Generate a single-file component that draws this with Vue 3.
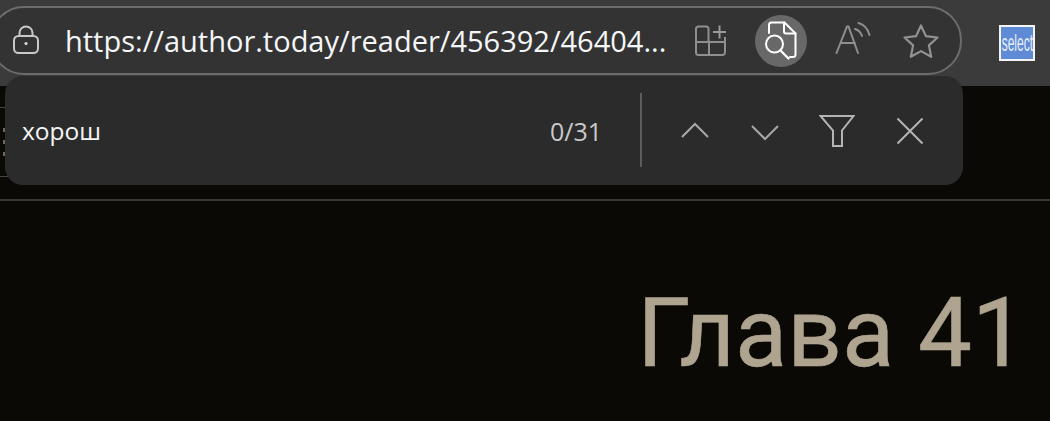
<script setup>
const title = 'Глава 41'
</script>

<template>
  <div class="page">
    <header class="toolbar">
      <div class="address">
        <svg class="lock" width="26" height="30" viewBox="0 0 26 30" fill="none" stroke="#c9c9c9" stroke-width="2">
          <rect x="1" y="11" width="24" height="17" rx="4.5" />
          <path d="M6.5 11V8a6.5 6.5 0 0 1 13 0v3" />
          <circle cx="13" cy="18.5" r="1.6" fill="#d8d8d8" stroke="none" />
        </svg>
        <span class="url">https://author.today/reader/456392/46404...</span>
        <div class="tools">
          <svg class="apps" width="34" height="34" viewBox="0 0 34 34" fill="none" stroke="#8f8f8f" stroke-width="2">
            <path d="M2 19V6a2.500 2.500 0 0 1 2.500-2.500H12A2.500 2.500 0 0 1 14.500 6v13" />
            <path d="M2 19h29v10.500a2.500 2.500 0 0 1-2.500 2.500h-24A2.500 2.500 0 0 1 2 29.500zM15 19v13M31 19v-5" />
            <path d="M19 9h13M25.500 2.500v13" stroke="#9a9a9a" />
          </svg>
          <div class="find-btn">
            <svg width="36" height="40" viewBox="0 0 36 40" fill="none" stroke="#fff" stroke-width="2" stroke-linecap="round" stroke-linejoin="round">
              <path d="M6 12V4a2.500 2.500 0 0 1 2.500-2.500h13l11 11v21a2.500 2.500 0 0 1-2.500 2.500h-3" />
              <path d="M21 1.500v9a2 2 0 0 0 2 2h9.500" />
              <circle cx="11.500" cy="23" r="8.500" />
              <path d="M17.500 29.500l8 8" stroke-width="2.400" />
            </svg>
          </div>
          <svg class="read" width="36" height="34" viewBox="0 0 36 34" fill="none" stroke="#8f8f8f" stroke-width="2" stroke-linecap="round">
            <path d="M1.500 31L12 4.500h1.500L23 31M6 21h14" />
            <path d="M20 7c3.500 1 6 4 7 7M23.500 1c5.500 1.500 9.500 6.500 11 12" />
          </svg>
          <svg class="star" width="36" height="34" viewBox="0 0 36 34" fill="none" stroke="#929292" stroke-width="2.200" stroke-linejoin="round">
            <path d="M18 1.500l4.900 10.600 11.600 1.400-8.600 7.900 2.300 11.400L18 27.100 7.800 32.800l2.300-11.400-8.600-7.900 11.600-1.400z" />
          </svg>
        </div>
      </div>
      <div class="select-logo"><span>select</span></div>
    </header>

    <main class="content">
      <div class="rule-band">
        <div class="dashes"><i /><i /><i /></div>
      </div>
      <h1 class="chapter">{{ title }}</h1>
    </main>

    <div class="find-panel">
      <span class="query">хорош</span>
      <span class="count">0/31</span>
      <span class="divider" />
      <div class="find-actions">
        <svg width="30" height="18" viewBox="0 0 30 18" fill="none" stroke="#a8a8a8" stroke-width="2">
          <path d="M2 16L15 3l13 13" />
        </svg>
        <svg width="30" height="18" viewBox="0 0 30 18" fill="none" stroke="#a8a8a8" stroke-width="2">
          <path d="M2 3l13 13L28 3" />
        </svg>
        <svg width="36" height="32" viewBox="0 0 36 32" fill="none" stroke="#b4b4b4" stroke-width="2">
          <path d="M1.500 1h33L23 15.500V31h-9V15.500z" />
        </svg>
        <svg width="28" height="28" viewBox="0 0 28 28" fill="none" stroke="#b4b4b4" stroke-width="2">
          <path d="M1.500 1.500l25 25M26.500 1.500l-25 25" />
        </svg>
      </div>
    </div>
  </div>
</template>

<style>
html, body { margin: 0; background: #0a0906; overflow: hidden; }
</style>

<style scoped>
.page {
  position: relative;
  width: 1050px;
  height: 421px;
  overflow: hidden;
  background: #0a0906;
  font-family: "Open Sans", "Noto Sans", sans-serif;
}
.toolbar {
  height: 86px;
  box-sizing: border-box;
  padding-top: 6px;
  background: #3b3b3b;
  display: flex;
  align-items: flex-start;
}
.address {
  width: 972px;
  height: 69px;
  margin-left: -10px;
  box-sizing: border-box;
  border: 2px solid #6c6c6c;
  border-radius: 34px;
  background: #333333;
  display: flex;
  align-items: center;
  padding-left: 21px;
}
.lock { margin-top: -1px; flex: none; }
.url {
  margin-left: 26px;
  width: 610px;
  flex: none;
  font-size: 29px;
  line-height: 40px;
  color: #f4f6f8;
  white-space: nowrap;
}
.tools {
  display: flex;
  align-items: center;
  margin-left: 19px;
}
.apps { margin-top: -1px; }
.find-btn {
  width: 52px;
  height: 52px;
  margin-left: 27px;
  border-radius: 50%;
  background: #686868;
  display: flex;
  align-items: center;
  justify-content: center;
}
.read { margin-left: 28px; margin-top: -3px; }
.star { margin-left: 32px; }
.select-logo {
  width: 36px;
  height: 36px;
  margin: 19px 0 0 37px;
  box-sizing: border-box;
  border: 2px solid #f2f4f8;
  background: #5f8bd6;
  display: flex;
  align-items: center;
  justify-content: center;
  overflow: hidden;
}
.select-logo span {
  font-family: "Liberation Sans", sans-serif;
  font-size: 24px;
  color: #e8eef8;
  transform: scaleX(0.5);
  white-space: nowrap;
}
.content {
  display: flex;
  flex-direction: column;
}
.rule-band {
  width: 30px;
  height: 68px;
  margin-top: 21px;
  border-top: 1px solid #4a473c;
  border-bottom: 1px solid #4a473c;
  display: flex;
  align-items: center;
}
.dashes {
  display: flex;
  flex-direction: column;
  gap: 8px;
  margin-left: 3px;
}
.dashes i {
  width: 2px;
  height: 4px;
  background: #6f6a58;
}
.chapter {
  margin: 22px 0 0;
  border-top: 2px solid #3a382f;
  padding: 75px 24px 0 0;
  text-align: right;
  font-family: Roboto, sans-serif;
  font-weight: 400;
  font-size: 96px;
  line-height: 114px;
  color: #afa48f;
  -webkit-text-stroke: 0.6px #afa48f;
}
.find-panel {
  position: absolute;
  left: 5px;
  top: 76px;
  width: 958px;
  height: 109px;
  border-radius: 18px;
  background: #2b2b2b;
  display: flex;
  align-items: center;
}
.query {
  margin-left: 17px;
  font-size: 24.5px;
  color: #f5f5f5;
  flex: 1;
}
.count {
  font-size: 25px;
  color: #c9c9c9;
  margin-right: 38px;
}
.divider {
  width: 2px;
  height: 74px;
  background: #5c5c5c;
  margin-top: -1px;
}
.find-actions {
  display: flex;
  align-items: center;
  margin: 0 39px 0 38px;
  gap: 41px;
}
.find-actions svg:nth-child(1) { margin-top: -2px; margin-right: -1px; }
.find-actions svg:nth-child(2) { margin-top: 2px; }
.find-actions svg:nth-child(3) { margin-left: -2px; margin-right: 0; }
</style>
